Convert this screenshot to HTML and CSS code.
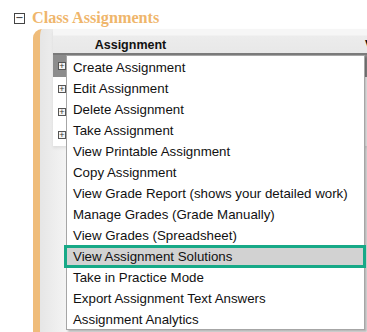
FILE: index.html
```html
<!DOCTYPE html>
<html lang="en">
<head>
    <meta charset="UTF-8" />
    <title>Class Assignments</title>
    <link rel="stylesheet" href="styles.css">
</head>
<body>
    <div class="section">
        <div class="section-title">
            <span class="toggle">&minus;</span>
            <h2>Class Assignments</h2>
        </div>

        <div class="panel">
            <div class="grid">
                <div class="grid-head">
                    <div class="col-assignment">Assignment</div>
                    <div class="col-next">V</div>
                </div>
                <div class="grid-row selected"><span class="expand">+</span></div>
                <div class="grid-row"><span class="expand">+</span></div>
                <div class="grid-row"><span class="expand">+</span></div>
                <div class="grid-row"><span class="expand">+</span></div>
            </div>

            <ul class="context-menu">
                <li>Create Assignment</li>
                <li>Edit Assignment</li>
                <li>Delete Assignment</li>
                <li>Take Assignment</li>
                <li>View Printable Assignment</li>
                <li>Copy Assignment</li>
                <li>View Grade Report (shows your detailed work)</li>
                <li>Manage Grades (Grade Manually)</li>
                <li>View Grades (Spreadsheet)</li>
                <li class="active">View Assignment Solutions</li>
                <li>Take in Practice Mode</li>
                <li>Export Assignment Text Answers</li>
                <li>Assignment Analytics</li>
            </ul>
        </div>
    </div>
</body>
</html>
```

FILE: styles.css
```css
body {
    margin: 0;
    background: #fff;
    font-family: 'Liberation Sans', Arial, sans-serif;
    overflow: hidden;
}

.section {
    padding-top: 8px;
}

.section-title {
    display: flex;
    align-items: center;
    padding-left: 14px;
    height: 21px;
}

.toggle {
    width: 9px;
    height: 9px;
    border: 1px solid #444;
    font-size: 10px;
    line-height: 8px;
    text-align: center;
    color: #222;
    margin-right: 7px;
    font-family: 'DejaVu Sans', sans-serif;
}

.section-title h2 {
    margin: 0;
    font-family: 'Liberation Serif', 'Times New Roman', serif;
    font-size: 16.2px;
    font-weight: bold;
    color: #efb66c;
}

.panel {
    position: relative;
    margin-left: 33px;
    height: 303px;
    border-left: 7px solid #efbc7a;
    border-top-left-radius: 9px;
    background: linear-gradient(to right, #e6e6e6, #f6f6f6 30px, #f4f4f4);
}

.grid {
    margin-left: 13px;
    width: 400px;
    background: #fff;
    box-shadow: 0 2px 3px rgba(0,0,0,0.08);
}

.grid-head {
    display: flex;
    height: 24px;
    background: linear-gradient(#f6f6f6, #f6f6f6 6px, #ececec 7px, #e8e8e8);
    border-bottom: 2px solid #7a7a7a;
    font-size: 12.5px;
    font-weight: bold;
    line-height: 33px;
    color: #111;
}

.col-assignment {
    width: 155px;
    text-align: center;
}

.col-next {
    margin-left: 157px;
}

.grid-row {
    height: 23px;
    padding-left: 5px;
    display: flex;
    align-items: center;
}

.grid-row.selected {
    background: #8c8c8c;
    height: 22px;
}

.expand {
    width: 6px;
    height: 6px;
    border: 1px solid #555;
    background: #f4f4f4;
    font-size: 9px;
    line-height: 6px;
    text-align: center;
    color: #333;
}

.context-menu {
    position: absolute;
    left: 26px;
    top: 26px;
    width: 297px;
    margin: 0;
    padding: 0;
    list-style: none;
    background: #fff;
    border: 1px solid #a6a6a6;
    box-shadow: 2px 2px 2px rgba(0,0,0,0.25);
    font-size: 13.3px;
    color: #111;
}

.context-menu li {
    height: 20px;
    padding-top: 1px;
    line-height: 21px;
    padding-left: 6px;
    white-space: nowrap;
}

.context-menu li.active {
    position: relative;
    background: #d2d2d2;
}

.context-menu li.active::after {
    content: "";
    position: absolute;
    top: 0;
    bottom: -2px;
    left: -3px;
    right: -2px;
    border: 3px solid #17a987;
}
```
